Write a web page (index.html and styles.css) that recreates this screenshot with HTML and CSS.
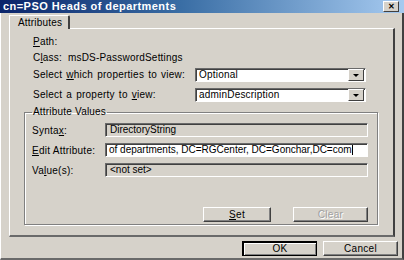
FILE: index.html
```html
<!DOCTYPE html>
<html lang="en">
<head>
  <meta charset="UTF-8">
  <title>cn=PSO Heads of departments</title>
  <link rel="stylesheet" href="styles.css">
</head>
<body>
  <div class="window">
    <div class="titlebar">
      <span class="title">cn=PSO Heads of departments</span>
      <span class="close">&#x2715;</span>
    </div>

    <div class="content">
      <div class="tabs">
        <div class="tab">Attributes</div>
      </div>

      <div class="panel">
        <div class="row"><span><u>P</u>ath:</span></div>
        <div class="row"><span>C<u>l</u>ass:&nbsp; msDS-PasswordSettings</span></div>

        <div class="row pick first">
          <span class="label-wide">Select <u>w</u>hich properties to view:</span>
          <div class="combo">
            <span class="combo-text">Optional</span>
            <span class="combo-btn"><span class="arrow"></span></span>
          </div>
        </div>
        <div class="row pick">
          <span class="label-wide">Select a property to <u>v</u>iew:</span>
          <div class="combo">
            <span class="combo-text">adminDescription</span>
            <span class="combo-btn"><span class="arrow"></span></span>
          </div>
        </div>

        <fieldset class="group">
          <legend>Attribute Values</legend>

          <div class="field">
            <span class="label">Synta<u>x</u>:</span>
            <div class="box readonly">DirectoryString</div>
          </div>
          <div class="field">
            <span class="label"><u>E</u>dit Attribute:</span>
            <div class="box edit">of departments, DC=RGCenter, DC=Gonchar,DC=com<span class="caret"></span></div>
          </div>
          <div class="field">
            <span class="label">Va<u>l</u>ue(s):</span>
            <div class="box readonly">&lt;not set&gt;</div>
          </div>

          <div class="group-buttons">
            <button class="btn set"><u>S</u>et</button>
            <button class="btn clear" disabled>Clear</button>
          </div>
        </fieldset>
      </div>

      <div class="footer">
        <button class="btn default">OK</button>
        <button class="btn">Cancel</button>
      </div>
    </div>
  </div>
</body>
</html>
```

FILE: styles.css
```css
body {
  margin: 0;
  font-family: "Liberation Sans", Arial, sans-serif;
  font-size: 10px;
  color: #000;
  background: #d6d2ca;
}
.window {
  width: 404px;
  height: 260px;
  box-sizing: border-box;
  background: #d6d2ca;
  border-left: 1px solid #fff;
  border-right: 2px solid #404040;
  border-bottom: 2px solid #6a6a6a;
  display: flex;
  flex-direction: column;
}
.titlebar {
  height: 13px;
  margin-left: -1px;
  margin-right: -2px;
  background: linear-gradient(to right, #0a246a 0%, #3a6ea5 45%, #a6caf0 100%);
  display: flex;
  align-items: center;
  justify-content: space-between;
  padding: 0 5px 0 3px;
}
.title {
  color: #fff;
  font-weight: bold;
  font-size: 11px;
  letter-spacing: 0.45px;
  line-height: 13px;
}
.close {
  width: 14px;
  height: 9px;
  background: #d6d2ca;
  border: 1px solid;
  border-color: #fff #404040 #404040 #fff;
  font-size: 8px;
  font-weight: bold;
  line-height: 9px;
  text-align: center;
  color: #000;
}
.content {
  flex: 1;
  display: flex;
  flex-direction: column;
  padding: 2px 7px 0 8px;
}
.tabs {
  display: flex;
  height: 13px;
}
.tab {
  width: 50px;
  height: 13px;
  padding-left: 8px;
  line-height: 13px;
  letter-spacing: 0.2px;
  border-top: 1px solid #fff;
  border-left: 1px solid #fff;
  border-right: 2px solid #404040;
  border-top-right-radius: 2px;
  position: relative;
  z-index: 1;
  background: #d6d2ca;
}
.panel {
  height: 209px;
  box-sizing: border-box;
  border-top: 1px solid #fff;
  border-left: 1px solid #fff;
  border-right: 2px solid #404040;
  border-bottom: 2px solid #6a6a6a;
  padding: 5px 14px 0 23px;
  display: flex;
  flex-direction: column;
}
.row {
  height: 16px;
  line-height: 16px;
  display: flex;
  align-items: center;
  letter-spacing: 0.2px;
}
.pick {
  height: 14px;
  margin-top: 2px;
}
.pick + .pick {
  margin-top: 6px;
}
.label-wide {
  width: 162px;
  letter-spacing: 0.25px;
  word-spacing: 1px;
}
.combo {
  width: 171px;
  height: 14px;
  box-sizing: border-box;
  background: #fff;
  border: 1px solid;
  border-color: #6a6a6a #fff #fff #6a6a6a;
  box-shadow: inset 1px 1px 0 #404040;
  display: flex;
  align-items: center;
  letter-spacing: 0.2px;
}
.combo-text {
  flex: 1;
  padding-left: 3px;
  line-height: 12px;
}
.combo-btn {
  width: 14px;
  height: 10px;
  margin-right: 1px;
  background: #d6d2ca;
  border: 1px solid;
  border-color: #fff #404040 #404040 #fff;
  display: flex;
  align-items: center;
  justify-content: center;
}
.arrow {
  width: 0;
  height: 0;
  border-left: 3px solid transparent;
  border-right: 3px solid transparent;
  border-top: 3px solid #000;
}
.group {
  margin: 4px 0 0 -9px;
  padding: 3px 9px 2px 7px;
  width: 354px;
  box-sizing: border-box;
  border: 1px solid #808080;
  box-shadow: 1px 1px 0 #fff, inset 1px 1px 0 #fff;
  display: flex;
  flex-direction: column;
}
.group legend {
  padding: 0 1px;
  margin-left: 0;
  line-height: 12px;
  letter-spacing: 0.2px;
}
.field {
  display: flex;
  align-items: center;
  height: 14px;
  margin-top: 6px;
}
.field:first-of-type {
  margin-top: 2px;
}
.label {
  width: 73px;
  letter-spacing: 0.25px;
}
.box {
  flex: 1;
  height: 14px;
  box-sizing: border-box;
  border: 1px solid;
  border-color: #6a6a6a #fff #fff #6a6a6a;
  box-shadow: inset 1px 1px 0 #404040;
  padding-left: 4px;
  line-height: 12px;
  white-space: nowrap;
  overflow: hidden;
}
.readonly {
  background: #d6d2ca;
}
.edit {
  background: #fff;
  padding-left: 3px;
}
.caret {
  display: inline-block;
  width: 1px;
  height: 10px;
  background: #000;
  vertical-align: middle;
}
.group-buttons {
  display: flex;
  justify-content: flex-end;
  gap: 22px;
  margin-top: 30px;
}
.btn {
  font-family: "Liberation Sans", Arial, sans-serif;
  font-size: 10px;
  letter-spacing: 0.3px;
  height: 15px;
  padding: 0;
  background: #d6d2ca;
  color: #000;
  border: 1px solid;
  border-color: #fff #404040 #404040 #fff;
  box-shadow: inset -1px -1px 0 #808080;
  line-height: 12px;
}
.set {
  width: 68px;
}
.clear {
  width: 75px;
  color: #a0a0a0;
  text-shadow: 1px 1px 0 #fff;
}
.footer {
  display: flex;
  justify-content: flex-end;
  gap: 6px;
  margin-top: 4px;
  margin-right: -3px;
}
.footer .btn {
  width: 75px;
  height: 15px;
}
.default {
  outline: 1px solid #000;
  outline-offset: -1px;
  border-width: 2px 1px 1px 2px;
  border-color: #000;
  box-shadow: inset 1px 1px 0 #fff, inset -1px -1px 0 #808080;
}
```
